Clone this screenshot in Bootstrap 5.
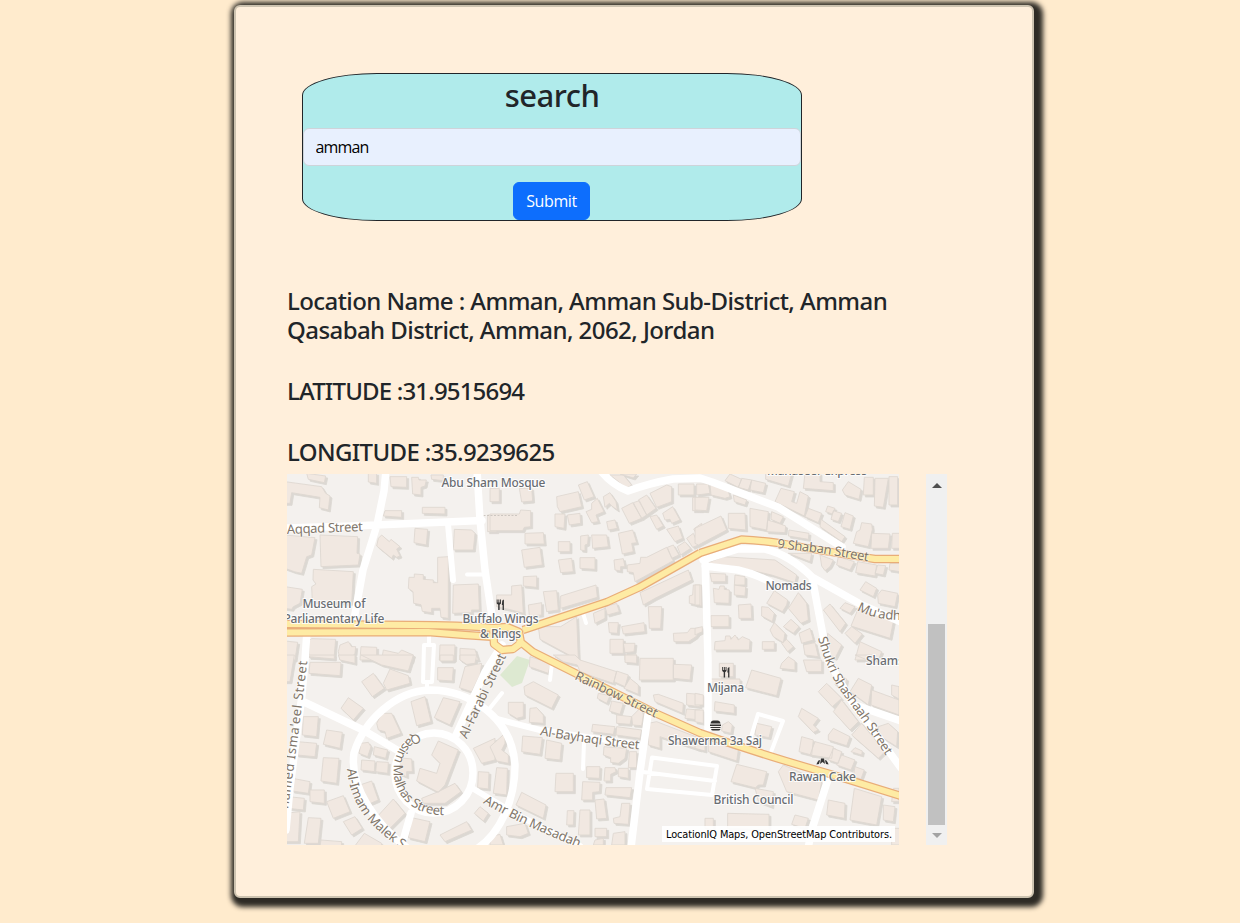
<!DOCTYPE html>
<html lang="en">
<head>
<meta charset="utf-8">
<meta name="viewport" content="width=device-width, initial-scale=1">
<title>City search</title>
<link href="https://cdn.jsdelivr.net/npm/bootstrap@5.3.0/dist/css/bootstrap.min.css" rel="stylesheet">
<script src="https://cdn.jsdelivr.net/npm/bootstrap@5.3.0/dist/js/bootstrap.bundle.min.js"></script>
<style>
body{background:#ffebcd;font-family:"Open Sans","Noto Sans",sans-serif;height:923px;overflow:hidden}
.panel{width:800px;height:893px;margin:5px 0 0 234px;padding:66px 51px 0;background:#ffefdb;background-clip:padding-box;border:2px solid #cdc3b0;border-radius:6px;box-shadow:3px 3px 5px 6px #2e2b25}
.search-form{width:500px;margin-left:15px;background:#b0ebeb;border:1px solid #212529;border-radius:15%}
.search-form h2{font:500 31px/38.4px "Noto Sans",sans-serif;letter-spacing:-.5px;height:38.4px;padding-top:2px}
.search-form .form-control{background:#e8f0fe;color:#000;height:38px;border-color:#ced4da;letter-spacing:-.85px;padding-left:11.500px}
.search-form .btn{width:77px;padding-left:0;padding-right:0;letter-spacing:-.4px;margin-right:1px}
.result{width:661px;margin-top:66px}
.result h4{font:500 24px/28.8px "Noto Sans",sans-serif;letter-spacing:-.57px;margin-bottom:32px;white-space:nowrap}
.result h4.lat{letter-spacing:-.83px}
.result h4.last{margin-bottom:7.400px;letter-spacing:-.62px}
.map-row{height:371px}
.map{width:612px;height:371px;display:block}
.scroller{width:21px;margin-right:1px;background:#f0f0f0;padding:9px 2px 7px}
.thumb{height:201px;background:#c1c1c1}
.up,.down{width:0;height:0;border:5px solid transparent}
.up{border-top:0;border-bottom-color:#505050}
.down{border-bottom:0;border-top-color:#a3a3a3}
.w{fill:none;stroke:#fff;stroke-linejoin:round;stroke-linecap:round;stroke-width:7.5}
.t{stroke-width:4}
.oc,.oy{fill:none;stroke:#e9ad78;stroke-width:8.4;stroke-linejoin:round}
.oy{stroke:#feeba4;stroke-width:6}
.poi,.st{font:500 12px "Noto Sans",sans-serif;fill:#696d72;stroke:#fff;stroke-width:2px;stroke-opacity:.85;paint-order:stroke;text-anchor:middle}
.st{font-size:13px;font-weight:400;fill:#81766a;text-anchor:start;stroke-width:1.6px;stroke-opacity:.5}
.ic{fill:#333;stroke:none}
</style>
</head>
<body>
<main class="panel">
<form class="search-form text-center" onsubmit="return false">
<h2 class="mb-3">search</h2>
<input class="form-control mb-3" value="amman" aria-label="City">
<button class="btn btn-primary" type="submit">Submit</button>
</form>
<section class="result">
<h4>Location Name : Amman, Amman Sub-District, Amman<br>Qasabah District, Amman, 2062, Jordan</h4>
<h4 class="lat">LATITUDE :31.9515694</h4>
<h4 class="last">LONGITUDE :35.9239625</h4>
<div class="map-row d-flex justify-content-between">
<svg class="map" viewBox="287 474 612 371" role="img" aria-label="Map of Amman">
<defs>
<g id="bld">
<!-- north west blocks -->
<g transform="translate(285 470) scale(.33333)">
<path d="M0 35 110 50 122 70 135 78 130 120 103 113 105 82 20 68 15 100H0zM65 10 122 18 118 38 70 28zM315 20 365 20 365 52 318 50zM250 10H275V40L250 36zM300 122 350 122 350 142 295 138zM380 22 400 22 402 30 424 30 420 48 408 52 408 75 383 72zM412 112H480V132L412 130zM438 15H475V32L440 28zM390 175 428 178 424 225 387 218zM105 195 218 200 216 250 225 252 220 285 108 290zM0 195 90 203 80 255 65 260 50 310 28 305 0 295zM85 298 205 305 200 400 82 395 80 350 93 342 84 330zM0 350 52 358 45 400 25 410 20 418 0 415zM290 195 313 215 318 208 345 230 335 237 345 258 335 262 325 255 320 265 275 228 280 205zM508 178 560 180 570 190 565 240 505 240zM458 262 490 260 490 445 468 442 465 415 440 415 440 428 412 424 408 404 386 400 384 365 370 355 372 322 388 322 388 312 415 314 415 328 445 330 445 338 458 338zM505 345 580 342 583 420 560 420 560 428 503 430zM80 506 152 508 147 565 72 562 72 512zM0 513 38 517 30 570H0zM165 525 190 515 200 530 212 530 210 550 195 570H165L160 545zM228 530 275 532V570H225zM295 540 340 550 350 540 385 555 380 575 290 570zM465 525 510 525 508 570H463zM525 535 570 538 580 570H525zM608 135H635V185H608z"/>
</g>
<!-- north centre blocks -->
<g transform="translate(490 470) scale(.33333)">
<path d="M0 55 28 55 28 95H0zM88 55H125L128 93 95 96zM0 132 88 132 92 120 122 122 122 170 103 172 98 182H0zM265 45 292 35 312 80 283 90zM200 80 265 65 275 110 210 125 202 110zM340 80 360 68 378 95 382 120 365 108 358 100 345 112zM288 125 305 118 305 100 322 85 342 125 318 135 325 155 305 158zM195 132H225L222 175 195 170zM232 135 270 130 272 160 238 165zM350 155 375 150 382 175 355 180zM105 190 160 188 163 222 105 222zM95 240 150 232 157 285 103 292zM205 215 240 215 240 245 205 245zM272 198 295 195 293 222 285 225 285 242 272 240zM305 195H350L355 230 308 235zM205 270 245 265 250 305 212 308zM270 263 315 263V298L270 295zM385 190 428 180 440 218 425 220 430 245 397 252zM372 270 400 266 405 290 392 290V303L375 300zM100 320 140 318 140 352 100 348zM395 115 428 98 455 145 418 160zM430 98 448 92 470 135 455 145zM445 90 470 75 498 115 470 135zM480 70 530 45 545 50 545 95 500 112zM480 140 500 135 520 168 500 178zM518 130 548 110 570 150 545 160 540 148 525 150zM530 178 565 168 578 205 555 215zM565 42H612V75H565zM608 82H635V122H608zM360 15H400L425 45 410 55zM390 12H440L430 24zM412 285 450 280 452 262 470 262 530 232 550 272 435 335 430 308 412 305zM532 232 550 225 567 255 545 265zM562 230 585 215 602 235 572 255zM590 205 610 190 625 225 608 232zM611 177 635 160V218zM212 378 318 345 322 382 212 415zM160 365 200 362 205 420 170 425zM115 405 155 398 155 435 118 438zM65 348 95 345 100 430 65 420 20 410V375H65zM145 470 212 470 220 465 260 440 265 570 150 508zM310 430 345 415V445L315 460zM345 410 380 400 388 425 352 435zM450 368 595 300 605 330 495 385 460 405zM475 410H515L512 475 478 475zM355 458H385L382 490 358 488zM395 470 462 458 465 485 400 492zM360 508H400V550H360zM400 520H435L432 545 405 548zM405 555H440V570H405zM550 490 592 488 602 475H635L618 500 595 515H552zM598 378 608 375 610 345H635V408L598 400z"/>
</g>
<!-- north east blocks -->
<g transform="translate(695 470) scale(.33333)">
<path d="M5 42H40L45 70 5 75zM45 42 98 58 105 80 90 85 48 75zM0 82H42L35 122 0 120zM105 12 140 28 130 52 90 32zM140 25 170 30 160 60 130 52zM170 30 212 40 205 68 165 60zM115 75 155 90 150 105 118 95zM212 10H290L280 48 212 28zM330 10H375V35L415 38V62L325 55zM442 60 460 35 498 58 492 88 450 75zM508 22H535V75H505zM540 25H580L565 112 538 108zM582 20H608V105H582zM100 130H150L152 180 100 175zM165 115 220 125 215 180 165 170zM230 125 265 140 255 160 228 148zM258 55 298 65 290 95 305 100 315 65 340 78 328 138 240 95zM340 115 380 130 370 158 330 140zM0 175 78 138 95 180 10 225 0 220zM218 150 250 160 272 168 270 188 215 185zM282 180 342 190 340 208 280 198zM398 108 420 115 412 132 392 125zM415 122 440 130 430 155 408 148zM450 128 475 138 465 178 438 170zM378 148 450 200 440 215 375 170zM500 158 530 162 532 178 520 230 475 220 485 185 495 180zM530 190 585 192 580 235 528 235zM592 190H615V235H590zM35 280 85 260 240 270 305 315 300 338 230 315 120 290zM280 250 350 250 345 275zM375 255 415 270 405 290 390 302 380 288zM430 260 478 275 465 300 425 285zM488 275 545 285 540 318 482 308zM548 285 572 287 565 315 540 310zM585 280H615V305L582 300zM45 310 92 312V335H50zM120 315 150 320V345H118zM55 355 72 358 75 348 88 348 88 358 103 360 102 400 58 398zM118 345 152 350 150 378 118 375zM0 345H15V405H0zM130 405 168 402 170 445 132 445zM48 437 102 437V470H48zM0 475 22 470V485L0 495zM60 515 90 512 92 498 105 498 108 508 120 495 130 510 142 500 165 510 163 540 58 540zM215 400 238 362 278 390 275 405 262 425zM280 415 310 368 335 400 340 450 318 460zM200 410 220 412 238 430 232 455 200 438zM225 480 238 458 270 490 265 518 235 500zM260 520 275 508 295 530 278 545zM265 470 288 448 312 470 295 490zM312 490 345 475 355 510 320 520zM325 525 360 518 370 560 330 555zM385 420 405 402 452 460 435 485zM495 360 512 335 545 355 535 380zM548 375 560 360 608 370 600 410 550 400zM435 415 450 398 480 410 465 430zM490 415 598 440 585 505 468 468zM450 490 470 470 502 492 480 520zM495 515 560 545 550 570H480zM398 490 440 525 420 565 395 555zM202 515H238V538H202z"/>
</g>
<!-- south west blocks -->
<g transform="translate(285 655) scale(.33333)">
<path d="M0 0H28L15 80H0zM68 0H148V12L72 5zM160 0H210V25L165 15zM75 22H168L165 62 72 55zM228 0H385L370 48 290 30zM315 42 370 62 375 85 305 105 295 85zM230 80 265 55 298 100 262 125zM168 160 190 128 235 160 205 195zM458 38H505L502 78 458 75zM465 0H505V18H465zM525 0H575L570 25 545 28 525 15zM540 35 590 25 585 60 560 110 523 98zM55 185H100L95 245 52 240zM125 225 172 232 165 280 115 268zM38 260 95 265 90 305 35 300zM115 308 162 310 155 385 108 378zM275 205 290 175 320 175 348 235 305 250 300 230 280 225zM378 140 420 125 438 200 395 212zM475 128 525 140 495 210 448 188zM228 265 250 262 258 275 248 305 222 295zM268 275 308 285 302 310 265 300zM230 315 270 318 268 350 228 345zM275 320 310 322 308 355 272 350zM340 308 380 312 382 350 365 350V365L340 355zM440 300 460 258 520 285 480 390 460 412 395 378 405 340 455 355 465 325zM410 430 460 410 510 385 528 410 480 445 415 445zM225 390 260 378 280 435 245 450zM125 440 175 422 195 470 145 490zM22 370 75 380 70 415 22 408zM75 405 118 405V445L75 440zM10 425 58 430 55 465 10 460zM0 475 45 470 40 560H0zM70 488 108 490 100 565H58zM108 555 170 560V575H105zM175 500 210 485 232 520 200 540zM272 490 325 432 360 475 310 525zM238 535 290 565V575H208zM380 488 435 500 420 560 370 548zM465 540 545 500 560 525 480 560zM565 280 630 250V315L590 325zM580 350 612 352 610 402 578 398zM568 475 585 455 610 475 595 498z"/>
</g>
<!-- south centre blocks -->
<g transform="translate(490 655) scale(.33333)">
<path d="M120 5 182 25 175 55 118 35zM190 0H255L270 15 380 50 370 85 310 65 270 50 262 30 220 20zM380 48 415 60 405 95 372 80zM420 70 445 90V118L402 100zM450 10H550V75H448zM550 28 605 30 600 75 550 70zM405 0H440V25L405 22zM102 95 130 80 205 120 185 160 105 120zM55 142 100 142V185L80 190 55 175zM120 160 140 158 160 180V205L118 202zM325 115 360 122 350 145 322 130zM365 138 400 145 390 178 358 168zM490 120 505 118 580 145 578 175 495 140zM590 115 630 118V155L590 150zM590 162 630 165V195L585 190zM380 180 425 185 420 208 380 205zM425 185 455 155 460 180 455 212 428 210zM308 208 375 215 370 238 305 230zM380 215 455 225 450 250 378 240zM475 205 500 200 630 250V285L510 245 510 280 475 270zM98 243 157 248 150 298 95 290zM170 255 215 265 210 315 165 310zM342 275 410 280 405 310 385 325 362 322 362 308 340 300zM418 290H440V338H415zM198 355H250V410H195zM290 335 330 335 328 370 290 368zM345 338 375 338 378 350 362 358V378H342zM385 340H415V370L385 365zM278 380 330 382 328 410 308 412 308 435 275 435zM348 398 425 398 420 428 345 420zM315 435 342 432 350 490 320 492zM0 275 45 235V265L35 285 55 300V325L20 318zM20 338 52 340 50 420 10 415zM95 412 168 450 160 490 78 450zM232 467H252L250 510H230zM270 465H300V540H265zM395 445 420 445 415 508 372 505 370 490 390 485zM315 520H350V545H315zM370 535 405 530V570H365zM50 515 105 505 115 535 90 545 50 540zM0 545 30 538 40 570H0zM315 555 340 550V570H310z"/>
</g>
<!-- south east blocks -->
<g transform="translate(695 655) scale(.33333)">
<path d="M73 25H115V65H73zM170 45 258 70 245 122 152 98zM60 140 118 150V175L58 168zM0 115 25 120V150H0zM0 165H25V205L0 200zM100 200 112 210 108 235 80 228 82 210zM32 72H135V95H32zM260 25 280 5 300 18V45L255 40zM325 15H380V50H335zM480 0H535L530 20zM310 185 320 160 370 190 355 210 370 225 355 232zM185 205 230 215 222 248 180 240zM400 240 415 220 465 245 455 272 400 255zM320 245 355 255 350 300 312 290zM360 260 415 275 410 310 345 300zM415 280 440 290 430 325 400 315zM440 300 480 315 468 345 425 330zM480 335 508 345 498 372 475 365zM468 290 480 278 502 288 500 300zM370 110 395 85 440 130 412 155zM415 170 440 135 490 200 465 225zM470 240 500 205 570 290 550 310zM430 58 455 72 450 100 420 90zM465 110 490 70 530 90 520 150zM530 105 612 135V180L528 150zM550 215 580 205 608 230 605 275 550 240zM590 90 612 95V132L590 120zM125 328 215 350 205 390 190 390 180 400 235 410 230 455 190 440 180 398 108 380zM0 258H30V288L0 280zM40 255 130 285 125 318 40 290zM250 350 265 330 380 380 370 435 275 410zM400 435 450 445 448 490 395 480zM478 400 560 425 545 510 465 495zM565 450 600 455 595 500 565 495zM595 400H612V440H590zM98 475 222 478V525L98 520zM30 490H55V525L30 520zM300 480 340 490 330 520 290 508zM590 520H615V570H590z"/>
</g>
</g>
<path id="p1" d="M287 534 364 531"/><path id="p2" d="M777 548 820 553 872 562"/>
<path id="p3" d="M857 610Q875 620 901 620"/><path id="p4" d="M818 638Q828 675 845 697T888 759"/>
<path id="p5" d="M574 679 660 720"/><path id="p6" d="M540 735Q575 742 645 750"/>
<path id="p7" d="M467 739Q480 710 508 653"/><path id="p8" d="M288 809Q298 740 308 655"/>
<path id="p9" d="M347 769C350 805 370 830 412 855"/><path id="p10" d="M418 733C380 747 383 820 452 815"/>
<path id="p11" d="M483 803Q525 827 590 852"/>
<path id="orange" d="M285 624 412 625Q460 625 495 628M285 632.5 428 632 465 635 495 637M700 553 741.500 539.500Q770 541 790 545T875 559L901 559M523 630 607 602 640 587 700 553M518 640 533 652 655 713 700 733Q760 754 830 774L901 796M493 628 507 627 519 632 521 643 513 649 502 650 494 644Z"/>
</defs>
<path fill="#f4f1ee" d="M287 474h612v371H287z"/>
<path fill="#dde9d1" d="M500 675 517 656 530 660 522 683 512 687z"/>
<use href="#bld" x="2" y="2" fill="#dcd8d3" stroke="#dcd8d3" stroke-width="2.500"/>
<use href="#bld" fill="#f1e8e1" stroke="#dfd8d1" stroke-width="2.700"/>
<path d="M480 515.500h38" stroke="#ccc6c0" stroke-dasharray="2 1.500"/>
<g class="w">
<path d="M386 470 384 491 377 525 363 570 353 625M285 528 352 526 482 520.500M477 470 480 520 485 570 491 610 495 630M600 470Q612 485 628 491 650 483 673 479L700 478 712 482 778 507 842 547M703 560 738 549 765 549Q790 555 812 577L862 605 901 622M705 566 738 570Q756 574 770 582M705 557 708 660 708 728M812 577 822 630 828 660 852 702 882 742 901 768M855 705 901 721M829 776 813 826 808 848M648 715 640 772 631 848M410 850C375 825 349 785 354 753 364 721 395 691 430 690 470 690 512 718 515 765 515 800 500 835 475 850M395 773a39 40 0 1 0 78 0a39 40 0 1 0-78 0M456 735 485 672 502 645M302 701 363 730 397 750M307 631 305 660 302 695 290 788 286 830M411 813 401 848"/>
<path stroke-width="6" d="M448 524 453 580M497 719 540 730 640 745M472 788 517 815 580 846"/>
<path class="t" d="M467 574.500H484M429 633V644M424 645H434L432 682H423ZM427 682V690M583 613 586 623M750 740 758 714 783 721 771 752M652 757.500 717 766 712 795 647 789ZM643 772 715 781M584 742 583 769M552 662 550 680M502 693 490 708"/>
</g>
<use href="#orange" class="oc"/><use href="#orange" class="oy"/>
<g class="poi">
<text x="493.500" y="487" textLength="104">Abu Sham Mosque</text>
<text x="817" y="475" textLength="100">Manaseer Express</text>
<text x="334" y="608" textLength="63">Museum of</text><text x="334" y="622.500" textLength="101">Parliamentary Life</text>
<text x="500.500" y="623" textLength="76">Buffalo Wings</text><text x="500.500" y="637.500" textLength="41">&amp; Rings</text>
<text x="788.500" y="590" textLength="46">Nomads</text><text x="725.500" y="692" textLength="37">Mijana</text>
<text x="715" y="745" textLength="94">Shawerma 3a Saj</text><text x="822.500" y="781" textLength="67">Rawan Cake</text>
<text x="753.500" y="804" textLength="80">British Council</text><text x="885" y="664.500" textLength="38">Shams</text>
</g>
<g class="st">
<text><textPath href="#p1" textLength="76">Aqqad Street</textPath></text>
<text><textPath href="#p2" textLength="92">9 Shaban Street</textPath></text>
<text><textPath href="#p3">Mu'adh</textPath></text>
<text><textPath href="#p4" textLength="137">Shukri Shashaah Street</textPath></text>
<text><textPath href="#p5" textLength="90">Rainbow Street</textPath></text>
<text><textPath href="#p6" textLength="100">Al-Bayhaqi Street</textPath></text>
<text><textPath href="#p7" textLength="92">Al-Farabi Street</textPath></text>
<text><textPath href="#p8" textLength="149">hamed Isma'eel Street</textPath></text>
<text><textPath href="#p9" textLength="101">Al-Imam Malek S</textPath></text>
<text><textPath href="#p10" textLength="123">Qasim Malhas Street</textPath></text>
<text><textPath href="#p11" textLength="106">Amr Bin Masadah</textPath></text>
</g>
<g id="fork" class="ic"><path d="M496.700 599.500h.9v3h.8v-3h.9v3h.8v-3h.9v4l-1.400 1.300v5.200h-1.400v-5.200L496.700 603.500zM502.300 600.500l1.600-1v10.500h-1.300V605H501.800z"/></g>
<use href="#fork" x="225.500" y="67.500"/>
<path class="ic" d="M710.500 723.500q.5-3 3-3h4q2.500 0 3 3zM710 724.500h11v1.500h-11zM710.500 727h10v1h-10zM711 729h9.500q-.5 1.500-2 1.500h-5.500q-1.500 0-2-1.500z"/>
<path class="ic" d="M821 758.500h3l1 5.500-2.500-2-2.500 2zM819 760l1 .5-1 3.500-2.500.5q.5-2.500 2.500-4.500zM826 760l-1 .5 1 3.500 2.500.5q-.5-2.500-2.500-4.500z"/>
<path fill="#fff" fill-opacity=".9" d="M662 826h233v16H662z"/>
<text x="666" y="838" textLength="226" style="font:9.800px 'DejaVu Sans',sans-serif" fill="#000">LocationIQ Maps, OpenStreetMap Contributors.</text>
</svg>
<div class="scroller d-flex flex-column align-items-stretch" aria-hidden="true">
<div class="up align-self-center"></div>
<div class="thumb mt-auto"></div>
<div class="down align-self-center mt-2"></div>
</div>
</div>
</section>
</main>
</body>
</html>
